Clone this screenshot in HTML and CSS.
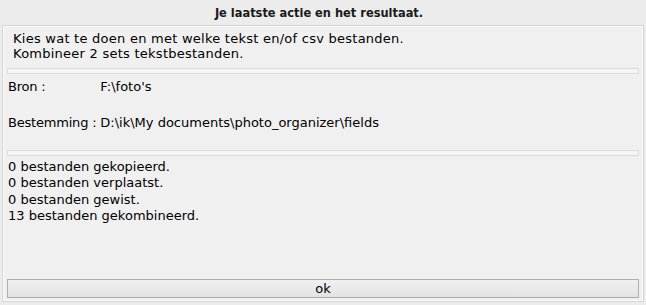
FILE: index.html
```html
<!DOCTYPE html>
<html>
<head>
<meta charset="utf-8">
<link rel="stylesheet" href="styles.css">
</head>
<body>
<div class="dialog">
  <div class="title">Je laatste actie en het resultaat.</div>
  <div class="panel">
    <div class="intro">
      <div>Kies wat te doen en met welke tekst en/of csv bestanden.</div>
      <div>Kombineer 2 sets tekstbestanden.</div>
    </div>
    <div class="bar"></div>
    <div class="paths">
      <span class="label">Bron :</span><span>F:\foto's</span>
      <span class="label">Bestemming :</span><span>D:\ik\My documents\photo_organizer\fields</span>
    </div>
    <div class="bar"></div>
    <div class="results">
      <div>0 bestanden gekopieerd.</div>
      <div>0 bestanden verplaatst.</div>
      <div>0 bestanden gewist.</div>
      <div>13 bestanden gekombineerd.</div>
    </div>
    <div class="spacer"></div>
    <button class="ok">ok</button>
  </div>
</div>
</body>
</html>
```
FILE: styles.css
```css
html, body {
  margin: 0;
  padding: 0;
}
body {
  width: 646px;
  height: 305px;
  background: #ececec;
  font-family: "DejaVu Sans", sans-serif;
  font-size: 13px;
  color: #000;
  overflow: hidden;
}
.dialog {
  display: flex;
  flex-direction: column;
  height: 305px;
  padding: 0 2px 3px 2px;
  box-sizing: border-box;
}
.title {
  height: 25px;
  line-height: 25px;
  text-align: center;
  font-family: "DejaVu Sans Condensed", "DejaVu Sans", sans-serif;
  font-weight: bold;
  font-size: 12.7px;
  color: #1a1a1a;
  padding-right: 8px;
}
.panel {
  flex: 1;
  display: flex;
  flex-direction: column;
  background: #f0f0f0;
  border: 1px solid #d6d6d6;
  box-shadow: inset 0 0 0 1px #fafafa;
  padding: 0 4px 3px 4px;
}
.intro {
  padding: 5px 0 0 6px;
  line-height: 15px;
  height: 37px;
  letter-spacing: 0.25px;
}
.bar {
  height: 6px;
  border: 1px solid #dcdcdc;
  background: #f5f5f5;
  box-sizing: border-box;
}
.paths {
  padding: 6px 0 0 1px;
  height: 70px;
  display: grid;
  grid-template-columns: auto 1fr;
  grid-auto-rows: 14px;
  row-gap: 22px;
  line-height: 14px;
}
.label {
  padding-right: 4px;
  letter-spacing: -0.2px;
}
.results {
  padding: 3px 0 0 1px;
  line-height: 16.3px;
}
.spacer {
  flex: 1;
}
.ok {
  height: 19px;
  border: 1px solid #adadad;
  background: linear-gradient(#f0f0f0, #e3e3e3);
  font-family: "DejaVu Sans", sans-serif;
  font-size: 13px;
  line-height: 17px;
  color: #000;
  padding: 0;
  margin: 0;
}
```
